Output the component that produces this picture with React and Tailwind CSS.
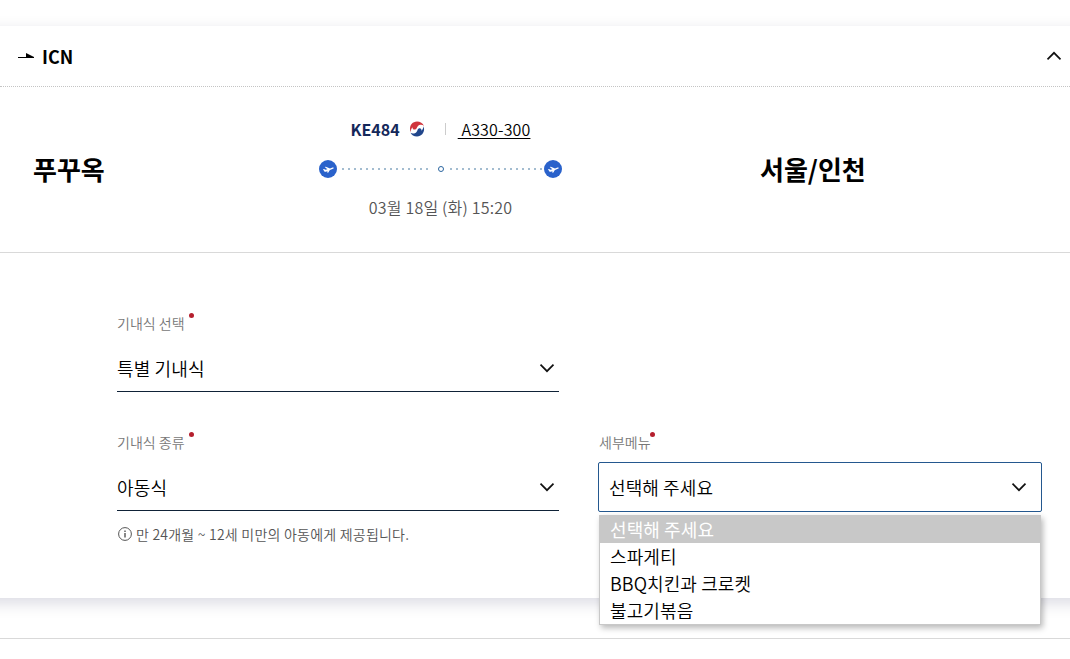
import React, { useState } from 'react';

const menuOptions = ['선택해 주세요', '스파게티', 'BBQ치킨과 크로켓', '불고기볶음'];

function Chevron({ up }) {
  return (
    <svg className={up ? 'w-4 h-4 rotate-180' : 'w-4 h-4'} viewBox="0 0 16 16" fill="none" stroke="#111" strokeWidth="1.7">
      <path d="M1.500 4.700 8 11.200l6.500-6.500" />
    </svg>
  );
}

function PlaneDot() {
  return (
    <svg className="w-[18px] h-[18px] shrink-0" viewBox="0 0 18 18">
      <circle cx="9" cy="9" r="9" fill="#2a62cb" />
      <path d="M4 9.200l1-.3 1.400.9 2-.6L5.700 7l1.100-.3 4.200 1.800 2.500-.9c.6-.2 1.100 0 1.200.3.100.4-.2.700-.8.900L7 11.700c-.7.2-1.200.1-1.600-.3z" fill="#fff" />
      <path d="M8.300 10.400l2.700-.9-1.600 2.900-1.100.3z" fill="#fff" />
    </svg>
  );
}

function DottedLine({ long }) {
  return (
    <svg className={long ? 'w-[92px] h-[2px]' : 'w-[86px] h-[2px]'}>
      <line x1="0" y1="1" x2="92" y2="1" stroke="#a3bcd0" strokeWidth="2" strokeDasharray="2 4" />
    </svg>
  );
}

function KoreanAirMark() {
  return (
    <svg className="w-4 h-4" viewBox="0 0 16 16">
      <path d="M2 11.600C-.6 7 2 .6 8 .5c3.200 0 5.800 1.700 7 4.400-1.700-1.500-4.600-1.500-6.200.3C7.600 6.600 7.800 8 6.200 8.500 4.500 9 3.300 7.900 3.500 6.200 2 7.800 1.600 9.800 2 11.600z" fill="#d0343c" />
      <path d="M14.200 4.900C16.600 9 14 15.400 8 15.500c-3.200 0-5.400-1.500-6.500-3.700 1.900 1.100 4.600.8 6-.9 1.200-1.500.8-3 2.300-3.500 1.700-.5 2.900.7 2.700 2.400 1.500-1.500 2-3.200 1.700-4.900z" fill="#21468b" />
    </svg>
  );
}

function Label({ children, tight }) {
  return (
    <div className="flex h-6 items-start text-[14px] leading-6 text-[#777]">
      <span className="-mt-px pt-px leading-[23px]">{children}</span>
      <span className={tight ? '-ml-px mt-[1px] size-[5px] rounded-full bg-[#b51f2e]' : 'mt-[1px] ml-[4px] size-[5px] rounded-full bg-[#b51f2e]'} />
    </div>
  );
}

function SelectLine({ value }) {
  return (
    <button className="mt-2 flex h-[48px] w-full items-center justify-between border-b border-[#0f2237] pr-1 text-[18px]">
      <span className="pt-[2px] tracking-[0.15px]">{value}</span>
      <Chevron />
    </button>
  );
}

export default function App() {
  const [selected, setSelected] = useState(0);

  return (
    <div className="h-[659px] overflow-hidden bg-white pt-[26px] font-['Noto_Sans_CJK_KR',sans-serif] font-[350] text-black">
      <div className="h-[613px] border-b border-[#d9d9d9]">
        <section className="-mx-6 h-[572px] bg-white px-6 shadow-[0_5px_15px_rgba(0,0,60,0.15)]">
          {/* Segment header */}
          <header className="flex h-[61px] items-center justify-between border-b border-dotted border-[#c4c4c4] pr-[8px] pl-[18px]">
            <div className="flex items-center gap-[8px] text-[18px] font-bold">
              <svg className="h-[6px] w-4" viewBox="0 0 16 6">
                <path d="M0 4h8V0l8 4v1H0z" fill="#000" />
              </svg>
              <span>ICN</span>
            </div>
            <Chevron up />
          </header>

          {/* Flight */}
          <div className="flex h-[166px] border-b border-[#d9d9d9] pl-[33px]">
            <strong className="w-[286px] pt-[63px] text-[26px] leading-[38px] font-bold">푸꾸옥</strong>
            <div className="flex w-[243px] flex-col items-center pt-[30px]">
              <div className="flex h-6 items-center text-[16px] leading-6">
                <span className="font-bold text-[#14285a]">KE484</span>
                <span className="ml-[9px]"><KoreanAirMark /></span>
                <span className="ml-[20px] h-3 w-px bg-[#ccc]" />
                <span className="ml-[12px] whitespace-pre tracking-[0.15px] underline underline-offset-2"> A330-300</span>
              </div>
              <div className="mt-[19px] flex w-full items-center">
                <PlaneDot />
                <span className="ml-[5px] flex w-[96px]"><DottedLine /></span>
                <span className="size-[6px] rounded-full border border-[#2c66a0]" />
                <span className="ml-[6px] flex w-[94px]"><DottedLine long /></span>
                <PlaneDot />
              </div>
              <p className="mt-[17px] text-[16px] leading-6 tracking-[0.2px] text-[#555]">03월 18일 (화) 15:20</p>
            </div>
            <strong className="ml-[198px] pt-[63px] text-[26px] leading-[38px] font-bold">서울/인천</strong>
          </div>

          {/* Meal selection */}
          <div className="pt-[59px] pr-[28px] pl-[117px]">
            <div className="w-[442px]">
              <Label>기내식 선택</Label>
              <SelectLine value="특별 기내식" />
            </div>
            <div className="mt-[39px] flex justify-between">
              <div className="w-[442px]">
                <Label>기내식 종류</Label>
                <SelectLine value="아동식" />
                <p className="mt-[11px] flex items-center gap-1 text-[14px] leading-6 tracking-[0.22px] text-[#555]">
                  <svg className="ml-px w-[14px] h-[14px]" viewBox="0 0 14 14" fill="none" stroke="#555">
                    <circle cx="7" cy="7" r="6.400" />
                    <path d="M7 6v4.500M7 3.500V5" strokeWidth="1.400" />
                  </svg>
                  <span>만 24개월 ~ 12세 미만의 아동에게 제공됩니다.</span>
                </p>
              </div>
              <div className="relative w-[444px]">
                <div className="pl-px"><Label tight>세부메뉴</Label></div>
                <button className="mt-[7px] flex h-[50px] w-full items-center justify-between rounded-[2px] border border-[#24588f] pr-[14px] pl-[10px] text-[18px]">
                  <span className="tracking-[0.1px]">선택해 주세요</span>
                  <Chevron />
                </button>
                <ul className="absolute top-[84px] left-px w-[442px] border border-[#c8c8c8] bg-white text-[18px] leading-[27px] tracking-[0.1px] shadow-[2px_3px_6px_rgba(0,0,0,0.28)]">
                  {menuOptions.map((option, i) => (
                    <li
                      key={option}
                      onClick={() => setSelected(i)}
                      className={i === selected ? 'h-[27px] bg-[#c8c8c8] pl-[10px] font-normal text-white' : 'h-[27px] pl-[10px]'}
                    >
                      {option}
                    </li>
                  ))}
                </ul>
              </div>
            </div>
          </div>
        </section>
      </div>
    </div>
  );
}
